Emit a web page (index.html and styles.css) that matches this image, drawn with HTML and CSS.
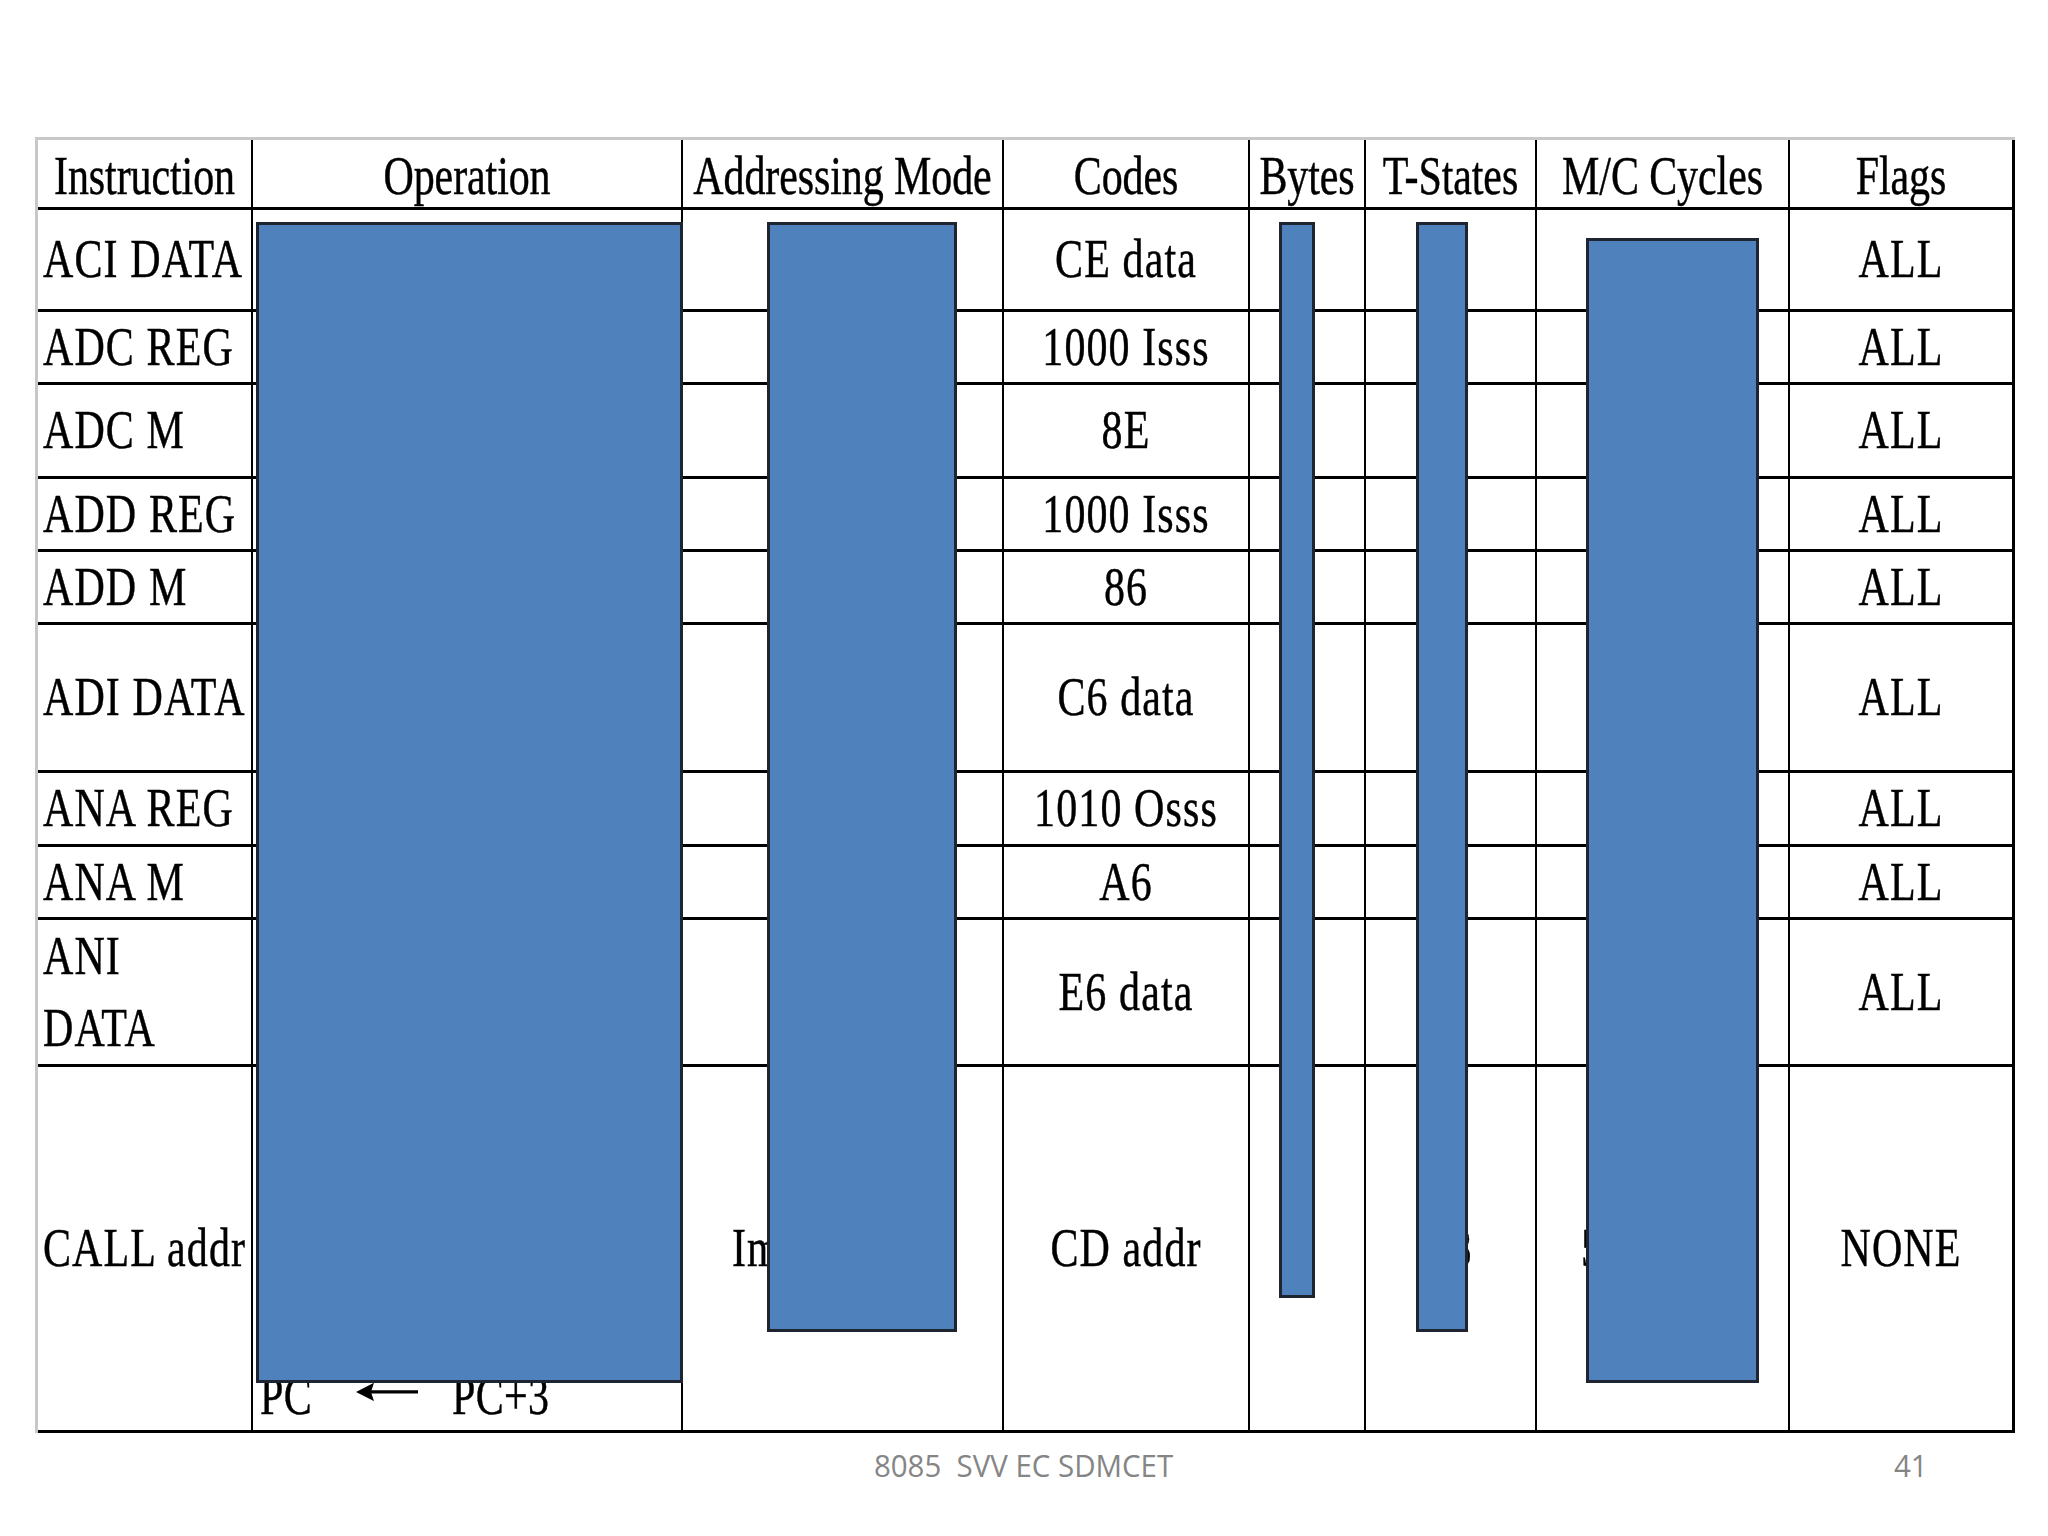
FILE: index.html
```html
<!DOCTYPE html>
<html lang="en">
<head>
<meta charset="utf-8">
<title>8085 Instructions</title>
<link rel="stylesheet" href="styles.css">
</head>
<body>
<div class="slide">
  <table class="ops">
    <thead>
      <tr class="r-head">
        <th class="c1"><span class="t">Instruction</span></th>
        <th class="c2"><span class="t">Operation</span></th>
        <th class="c3"><span class="t">Addressing Mode</span></th>
        <th class="c4"><span class="t">Codes</span></th>
        <th class="c5"><span class="t">Bytes</span></th>
        <th class="c6"><span class="t">T-States</span></th>
        <th class="c7"><span class="t">M/C Cycles</span></th>
        <th class="c8"><span class="t">Flags</span></th>
      </tr>
    </thead>
    <tbody>
      <tr class="r1">
        <td class="ins"><span class="t">ACI DATA</span></td><td></td><td></td>
        <td><span class="t">CE data</span></td><td></td><td></td><td></td>
        <td><span class="t">ALL</span></td>
      </tr>
      <tr class="r2">
        <td class="ins"><span class="t">ADC REG</span></td><td></td><td></td>
        <td><span class="t">1000 Isss</span></td><td></td><td></td><td></td>
        <td><span class="t">ALL</span></td>
      </tr>
      <tr class="r3">
        <td class="ins"><span class="t">ADC M</span></td><td></td><td></td>
        <td><span class="t">8E</span></td><td></td><td></td><td></td>
        <td><span class="t">ALL</span></td>
      </tr>
      <tr class="r4">
        <td class="ins"><span class="t">ADD REG</span></td><td></td><td></td>
        <td><span class="t">1000 Isss</span></td><td></td><td></td><td></td>
        <td><span class="t">ALL</span></td>
      </tr>
      <tr class="r5">
        <td class="ins"><span class="t">ADD M</span></td><td></td><td></td>
        <td><span class="t">86</span></td><td></td><td></td><td></td>
        <td><span class="t">ALL</span></td>
      </tr>
      <tr class="r6">
        <td class="ins"><span class="t">ADI DATA</span></td><td></td><td></td>
        <td><span class="t">C6 data</span></td><td></td><td></td><td></td>
        <td><span class="t">ALL</span></td>
      </tr>
      <tr class="r7">
        <td class="ins"><span class="t">ANA REG</span></td><td></td><td></td>
        <td><span class="t">1010 Osss</span></td><td></td><td></td><td></td>
        <td><span class="t">ALL</span></td>
      </tr>
      <tr class="r8">
        <td class="ins"><span class="t">ANA M</span></td><td></td><td></td>
        <td><span class="t">A6</span></td><td></td><td></td><td></td>
        <td><span class="t">ALL</span></td>
      </tr>
      <tr class="r9">
        <td class="ins"><span class="t">ANI<br>DATA</span></td><td></td><td></td>
        <td><span class="t">E6 data</span></td><td></td><td></td><td></td>
        <td><span class="t">ALL</span></td>
      </tr>
      <tr class="r10">
        <td class="ins"><span class="t">CALL addr</span></td>
        <td class="op-bottom"><span class="t">PC<svg class="arrow" viewBox="0 0 62 14" width="62" height="14"><polygon points="0,7 18,0 15,7 18,14" fill="#000"/><line x1="14" y1="7" x2="62" y2="7" stroke="#000" stroke-width="2.4"/></svg>PC+3</span></td>
        <td class="mode-left"><span class="t">Immediate</span></td>
        <td><span class="t">CD addr</span></td>
        <td></td>
        <td><span class="t">18</span></td>
        <td class="mc-left"><span class="t">5</span></td>
        <td><span class="t">NONE</span></td>
      </tr>
    </tbody>
  </table>

  <div class="shape shape-op"></div>
  <div class="shape shape-mode"></div>
  <div class="shape shape-bytes"></div>
  <div class="shape shape-tstates"></div>
  <div class="shape shape-mc"></div>

  <footer class="footer">
    <span></span>
    <span class="ft">8085&nbsp; SVV EC SDMCET</span>
    <span class="ft num">41</span>
  </footer>
</div>
</body>
</html>
```

FILE: styles.css
```css
* {
  box-sizing: border-box;
}

html, body {
  margin: 0;
  padding: 0;
  background: #ffffff;
}

.slide {
  position: relative;
  width: 2048px;
  height: 1536px;
  overflow: hidden;
  background: #ffffff;
}

.ops {
  margin: 137px 0 0 35px;
  width: 1980px;
  table-layout: fixed;
  border-collapse: separate;
  border-spacing: 0;
  border-top: 3px solid #c8c8c8;
  border-left: 3px solid #c8c8c8;
  font-family: "Liberation Serif", "Times New Roman", serif;
  font-size: 42px;
  line-height: 55px;
  color: #000;
}

.ops th,
.ops td {
  padding: 0 4px;
  border-right: 2px solid #000;
  border-bottom: 3px solid #000;
  text-align: center;
  vertical-align: middle;
  font-weight: normal;
  white-space: nowrap;
  overflow: hidden;
}

.ops th:last-child,
.ops td:last-child {
  border-right-width: 3px;
}

.ops th {
  padding-top: 5px;
  letter-spacing: -0.1px;
}

.ops td {
  letter-spacing: 1.1px;
}

.c1 { width: 215px; }
.c2 { width: 430px; }
.c3 { width: 321px; }
.c4 { width: 246px; }
.c5 { width: 116px; }
.c6 { width: 171px; }
.c7 { width: 253px; }
.c8 { width: 225px; }

.r-head { height: 70px; }
.r1 { height: 102px; }
.r2 { height: 73px; }
.r3 { height: 94px; }
.r4 { height: 73px; }
.r5 { height: 73px; }
.r6 { height: 148px; }
.r7 { height: 74px; }
.r8 { height: 73px; }
.r9 { height: 147px; }
.r10 { height: 366px; }

.t {
  display: inline-block;
  transform: scaleY(1.32);
  -webkit-text-stroke: 0.35px #000;
}

.ops td.ins {
  text-align: left;
  padding-left: 5px;
}

.ops td.op-bottom {
  text-align: left;
  vertical-align: bottom;
  padding: 0 0 6px 7px;
  letter-spacing: 0.3px;
}

.arrow {
  display: inline-block;
  vertical-align: 10px;
  margin: 0 34px 0 44px;
}

.ops td.mode-left {
  text-align: left;
  padding-left: 49px;
}

.ops td.mc-left {
  text-align: left;
  padding-left: 44px;
}

/* Blue rectangles lying over the table */
.shape {
  position: absolute;
  background: #4f81bd;
  border: 3px solid #1f2530;
}

.shape-op {
  left: 256px;
  top: 222px;
  width: 427px;
  height: 1161px;
}

.shape-mode {
  left: 767px;
  top: 222px;
  width: 190px;
  height: 1110px;
}

.shape-bytes {
  left: 1279px;
  top: 222px;
  width: 36px;
  height: 1076px;
}

.shape-tstates {
  left: 1416px;
  top: 222px;
  width: 52px;
  height: 1110px;
}

.shape-mc {
  left: 1586px;
  top: 238px;
  width: 173px;
  height: 1145px;
}

.footer {
  display: grid;
  grid-template-columns: 1fr auto 1fr;
  margin-top: 14px;
  font-family: "Open Sans", "Liberation Sans", Arial, sans-serif;
  font-size: 31px;
  line-height: 36px;
  color: #858585;
}

.ft {
  display: inline-block;
  transform: scaleX(0.95);
}

.num {
  justify-self: end;
  margin-right: 120px;
}
```
